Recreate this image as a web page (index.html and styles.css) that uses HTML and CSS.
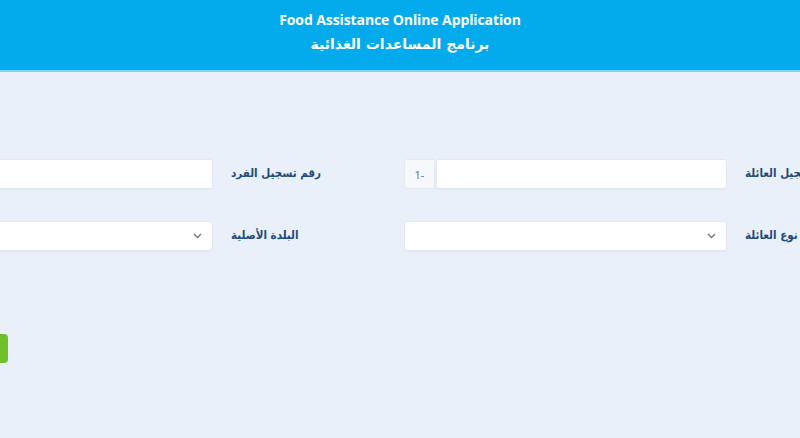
FILE: index.html
```html
<!DOCTYPE html>
<html lang="ar">
<head>
<meta charset="utf-8">
<title>Food Assistance Online Application</title>
<link rel="stylesheet" href="styles.css">
</head>
<body>
<header class="top">
  <div class="title-en">Food Assistance Online Application</div>
  <div class="title-ar">برنامج المساعدات الغذائية</div>
</header>
<main class="page">
  <form class="form" dir="rtl">
    <div class="field">
      <label class="lbl">رقم تسجيل العائلة</label>
      <div class="group">
        <input class="ctl" type="text">
        <span class="addon">1-</span>
      </div>
    </div>
    <div class="field">
      <label class="lbl">رقم تسجيل الفرد</label>
      <div class="group">
        <input class="ctl" type="text">
      </div>
    </div>
    <div class="field">
      <label class="lbl">نوع العائلة</label>
      <div class="group">
        <div class="ctl"></div>
        <svg class="chev" width="9" height="6" viewBox="0 0 9 6"><path d="M1 1l3.5 3.5L8 1" fill="none" stroke="#6b7280" stroke-width="1.3"/></svg>
      </div>
    </div>
    <div class="field">
      <label class="lbl">البلدة الأصلية</label>
      <div class="group">
        <div class="ctl"></div>
        <svg class="chev" width="9" height="6" viewBox="0 0 9 6"><path d="M1 1l3.5 3.5L8 1" fill="none" stroke="#6b7280" stroke-width="1.3"/></svg>
      </div>
    </div>
    <div class="actions">
      <button type="button" class="btn" aria-label="التالي"></button>
    </div>
  </form>
</main>
</body>
</html>
```
FILE: styles.css
```css
html, body {
  margin: 0;
  padding: 0;
}
body {
  width: 800px;
  height: 438px;
  overflow: hidden;
  background: #eaf0f9;
  font-family: "DejaVu Sans Condensed", "DejaVu Sans", sans-serif;
}
.top {
  height: 72px;
  background: #04abec;
  border-bottom: 2px solid #7fd2f5;
  box-sizing: border-box;
  color: #fff;
  text-align: center;
  display: flex;
  flex-direction: column;
  align-items: center;
  padding-top: 10px;
}
.title-en {
  font-family: "Open Sans", "Liberation Sans", sans-serif;
  font-weight: 700;
  font-size: 14px;
  line-height: 19px;
  letter-spacing: -0.1px;
}
.title-ar {
  font-family: "DejaVu Sans", sans-serif;
  font-weight: 700;
  font-size: 14px;
  line-height: 22px;
  margin-top: 4px;
}
.page {
  padding-top: 87px;
}
.form {
  width: 957px;
  margin-left: -110px;
  display: grid;
  grid-template-columns: 443px 443px;
  column-gap: 71px;
  row-gap: 32px;
}
.field {
  display: grid;
  grid-template-columns: 120px 323px;
  align-items: center;
}
.lbl {
  text-align: left;
  padding-left: 18px;
  padding-bottom: 2px;
  font-family: "DejaVu Sans Condensed", "DejaVu Sans", sans-serif;
  font-weight: 700;
  font-size: 11.5px;
  color: #1f4b7a;
  white-space: nowrap;
  overflow: hidden;
}
.group {
  display: flex;
  height: 30px;
  position: relative;
}
.ctl {
  flex: 1;
  height: 30px;
  box-sizing: border-box;
  margin: 0;
  border: 1px solid #e2e8f0;
  border-radius: 3px;
  background: #fff;
  box-shadow: 0 1px 1px rgba(30, 60, 100, 0.04);
  font: inherit;
}
.addon {
  width: 31px;
  height: 30px;
  box-sizing: border-box;
  border: 1px solid #e2e8f0;
  border-radius: 3px 0 0 3px;
  background: #f6f8fb;
  color: #5f6b78;
  font-family: "Open Sans", sans-serif;
  font-size: 11px;
  display: flex;
  align-items: center;
  justify-content: center;
  direction: ltr;
  margin-right: 1px;
}
.chev {
  position: absolute;
  left: 303px;
  top: 12px;
}
.actions {
  grid-column: 1 / -1;
  display: flex;
  justify-content: flex-end;
  padding-top: 51px;
}
.btn {
  width: 118px;
  height: 29px;
  border: none;
  border-radius: 4px;
  background: #6dbf2b;
}
```
